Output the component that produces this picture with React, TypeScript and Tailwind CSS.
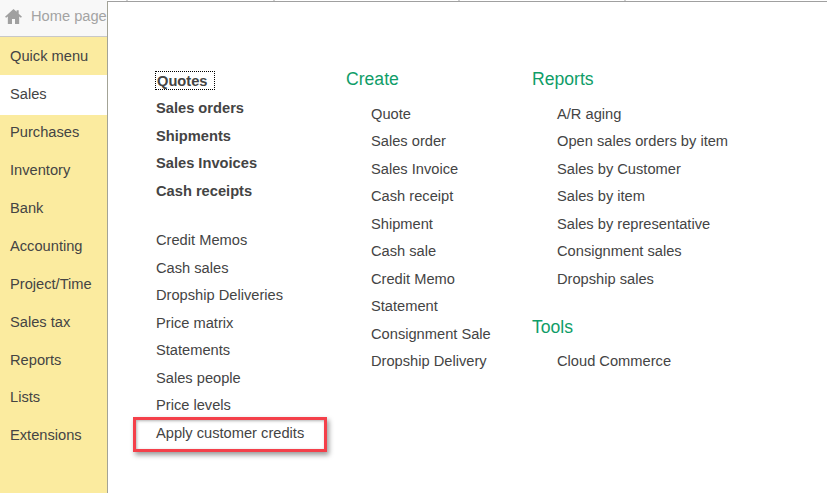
import React from "react";

const sideItems = [
  "Quick menu",
  "Sales",
  "Purchases",
  "Inventory",
  "Bank",
  "Accounting",
  "Project/Time",
  "Sales tax",
  "Reports",
  "Lists",
  "Extensions",
];

const boldLinks = ["Sales orders", "Shipments", "Sales Invoices", "Cash receipts"];
const plainLinks = [
  "Credit Memos",
  "Cash sales",
  "Dropship Deliveries",
  "Price matrix",
  "Statements",
  "Sales people",
  "Price levels",
];
const createLinks = [
  "Quote",
  "Sales order",
  "Sales Invoice",
  "Cash receipt",
  "Shipment",
  "Cash sale",
  "Credit Memo",
  "Statement",
  "Consignment Sale",
  "Dropship Delivery",
];
const reportLinks = [
  "A/R aging",
  "Open sales orders by item",
  "Sales by Customer",
  "Sales by item",
  "Sales by representative",
  "Consignment sales",
  "Dropship sales",
];

const LinkRow: React.FC<{ label: string; className?: string }> = ({ label, className = "" }) => (
  <div className={`h-[27.5px] leading-[27.5px] whitespace-nowrap ${className}`}>{label}</div>
);

export default function App() {
  return (
    <div className="flex h-[493px] w-[827px] overflow-hidden bg-white font-['Liberation_Sans',Arial,sans-serif] text-[14.67px] text-[#444444]">
      <div className="flex w-[107px] shrink-0 flex-col">
        <div className="flex h-[37px] shrink-0 items-center gap-[9px] overflow-hidden whitespace-nowrap border-b border-[#c8c8c8] bg-[#f8f8f8] pb-[4px] pl-[5px] text-[#a3a3a3]">
          <svg viewBox="0 0 18 16" className="h-[15px] w-[17px] shrink-0" fill="#a0a0a0" preserveAspectRatio="none">
            <path d="M9 0 0 8.2 1.2 9.4 3 8v8h4.4v-5.4h3.2V16H15V8l1.8 1.4L18 8.2 14.5 5V1.2h-2.2v1.8z" />
          </svg>
          <span>Home page</span>
        </div>
        <div className="flex flex-1 flex-col bg-[#fbeb9f]">
          {sideItems.map((item) => (
            <div
              key={item}
              className={`flex h-[38px] shrink-0 items-center pl-[10px] ${
                item === "Sales" ? "bg-white shadow-[0_2px_0_#ffffff]" : ""
              } ${item === "Lists" ? "-mt-px" : ""}`}
            >
              {item}
            </div>
          ))}
        </div>
      </div>

      <div className="flex min-w-0 flex-1 flex-col">
        <div className="flex h-px shrink-0 bg-white">
          <div className="ml-[19px] h-px w-[2px] bg-[#d0d0d0]" />
          <div className="ml-[145px] h-px w-[2px] bg-[#d0d0d0]" />
          <div className="ml-[183px] h-px w-[2px] bg-[#d0d0d0]" />
          <div className="ml-[164px] h-px w-[2px] bg-[#d0d0d0]" />
        </div>
        <div className="flex flex-1 border-l border-t border-l-[#a3a396] border-t-[#a0a0a0] bg-white pl-[48px] pt-[65.5px]">
          <div className="w-[190px] shrink-0">
            <div className="ml-[-1px] h-[27.5px] pt-[2px]">
              <span className="inline-block h-[19px] border border-dotted border-black pl-px pr-[6px] font-bold leading-[18px]">
                Quotes
              </span>
            </div>
            {boldLinks.map((label) => (
              <LinkRow key={label} label={label} className="font-bold" />
            ))}
            <div className="h-[22.2px]" />
            {plainLinks.map((label) => (
              <LinkRow key={label} label={label} />
            ))}
            <div className="relative">
              <LinkRow label="Apply customer credits" />
              <div className="absolute left-[-23px] top-[-3px] h-[35px] w-[194px] border-[3px] border-[#f4404a] shadow-[2px_3px_5px_rgba(0,0,0,0.4),inset_1px_1px_3px_rgba(0,0,0,0.3)]" />
            </div>
          </div>

          <div className="w-[186px] shrink-0">
            <div className="mb-[8px] mt-[-3px] h-[28px] text-[17.6px] leading-[28px] text-[#0f9d68]">Create</div>
            <div className="pl-[25px]">
              {createLinks.map((label) => (
                <LinkRow key={label} label={label} />
              ))}
            </div>
          </div>

          <div className="min-w-0 flex-1">
            <div className="mb-[8px] mt-[-3px] h-[28px] text-[17.6px] leading-[28px] text-[#0f9d68]">Reports</div>
            <div className="pl-[25px]">
              {reportLinks.map((label) => (
                <LinkRow key={label} label={label} />
              ))}
            </div>
            <div className="mb-[7px] mt-[20px] h-[28px] text-[17.6px] leading-[28px] text-[#0f9d68]">Tools</div>
            <div className="pl-[25px]">
              <LinkRow label="Cloud Commerce" />
            </div>
          </div>
        </div>
      </div>
    </div>
  );
}
